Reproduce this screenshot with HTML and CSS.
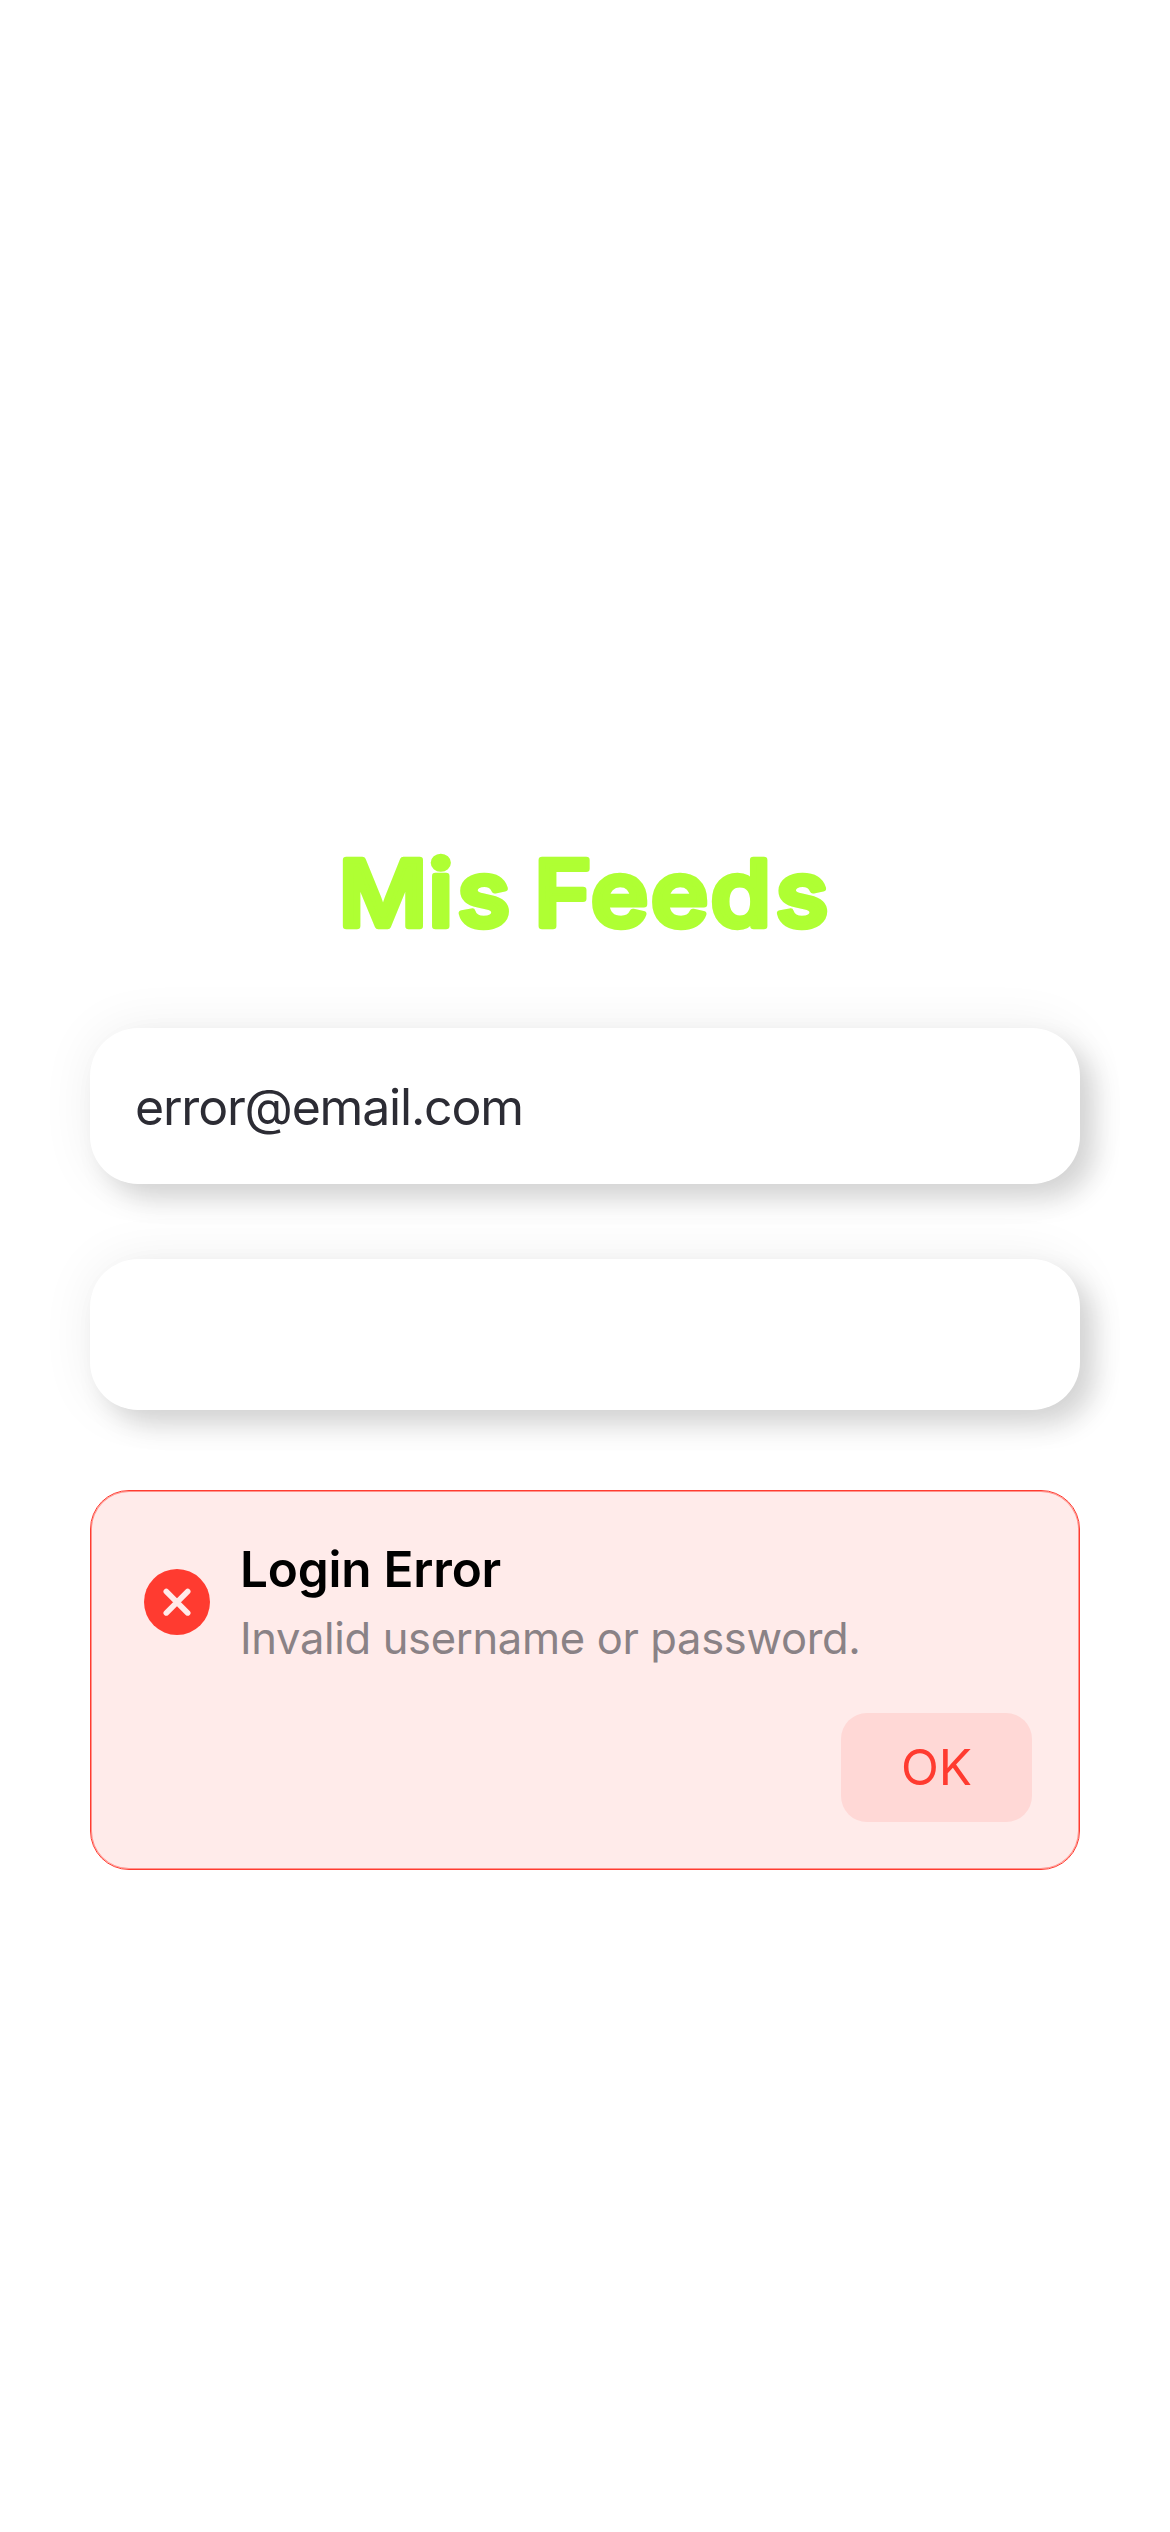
FILE: index.html
```html
<!DOCTYPE html>
<html lang="es">
<head>
<meta charset="utf-8">
<title>Mis Feeds</title>
<link rel="stylesheet" href="styles.css">
</head>
<body>
<main class="login">
  <h1 class="title">
    <svg class="title-art" viewBox="0 0 990 120" role="img" aria-label="Mis Feeds"><text transform="scale(1.07 1)" y="95.7" x="232.2 316.3 343.5 390 415.1 468.3 524.4 580.2 640.8">Mis Feeds</text></svg>
  </h1>
  <div class="field field-email"><span class="field-text">error@email.com</span></div>
  <div class="field field-password"></div>
  <section class="alert">
    <div class="alert-head">
      <svg class="alert-icon" viewBox="0 0 66 66"><circle cx="33" cy="33" r="33"/><path d="M22.3 22.5 43.7 43.9M43.7 22.5 22.3 43.9"/></svg>
      <div class="alert-copy">
        <h2 class="alert-title"><span>Login Error</span></h2>
        <p class="alert-message"><span>Invalid username or password.</span></p>
      </div>
    </div>
    <button class="ok" type="button">OK</button>
  </section>
</main>
</body>
</html>
```
FILE: styles.css
```css
* { box-sizing: border-box; }
body {
  margin: 0;
  background: #fff;
  font-family: Inter, "Liberation Sans", sans-serif;
}
.login {
  display: flex;
  flex-direction: column;
  height: 2532px;
  padding: 830px 90px 0;
}
.title { margin: 0 0 78px; height: 120px; }
.title-art { display: block; width: 990px; height: 120px; }
.title-art text {
  font-size: 91px;
  font-weight: 500;
  fill: #afff33;
  stroke: #afff33;
  stroke-width: 6.5px;
  stroke-linejoin: round;
  stroke-linecap: round;
}
.field {
  display: flex;
  align-items: center;
  padding: 0 45px;
  border-radius: 48px;
  background: #fff;
  box-shadow: 15px 15px 27px rgba(0, 0, 0, .145), 0 0 54px rgba(0, 0, 0, .065);
}
.field-email { height: 156px; margin-bottom: 75px; }
.field-password { height: 151px; margin-bottom: 80px; }
.field-text {
  padding-top: 2px;
  font-size: 50px;
  line-height: 60px;
  letter-spacing: -1.2px;
  color: #2c2c34;
}
.alert {
  display: flex;
  flex-direction: column;
  height: 380px;
  padding: 45px 47px 47px 53px;
  border: 1px solid #ff3b30;
  border-radius: 39px;
  background: #ffebea;
  box-shadow: inset 0 0 0 1px rgba(255, 59, 48, .5);
}
.alert-head { display: flex; gap: 30px; }
.alert-icon { width: 66px; height: 66px; margin-top: 33px; }
.alert-icon circle { fill: #ff3b30; }
.alert-icon path { fill: none; stroke: #ffebea; stroke-width: 5.6; stroke-linecap: round; }
.alert-title, .alert-message { margin: 0; white-space: nowrap; }
.alert-title { font-size: 49.5px; line-height: 66px; font-weight: 600; letter-spacing: -.2px; color: #000; }
.alert-message { font-size: 43.5px; line-height: 72px; font-weight: 400; letter-spacing: -.33px; color: #8a8286; }
.ok {
  align-self: flex-end;
  width: 191px;
  height: 109px;
  margin-top: auto;
  padding: 0;
  border: 0;
  border-radius: 26px;
  background: #ffd8d6;
  color: #ff3b30;
  font: 400 49.5px/109px Inter, "Liberation Sans", sans-serif;
}
```
